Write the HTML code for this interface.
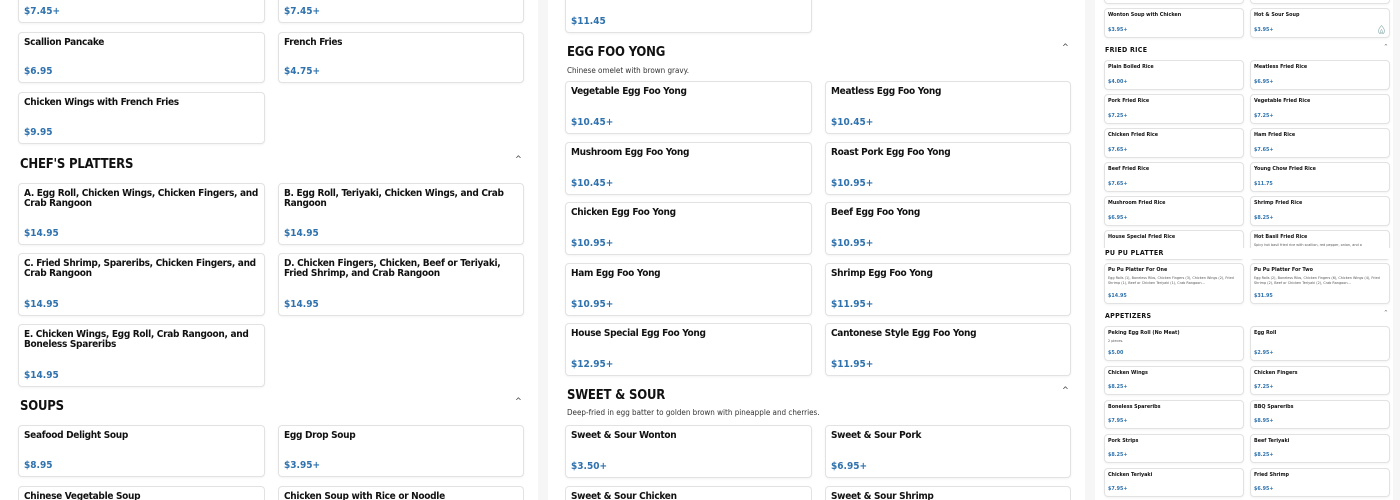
<!DOCTYPE html>
<html><head><style>
*{margin:0;padding:0;box-sizing:border-box}
html,body{width:1400px;height:500px;overflow:hidden}
body{background:#fff;font-family:"DejaVu Sans Condensed","DejaVu Sans","Liberation Sans",sans-serif;font-stretch:condensed;color:#111}
#w{position:relative;width:1400px;height:500px;overflow:hidden}
.g{position:absolute;top:0;height:500px;background:#f6f6f6}
.c{position:absolute;border:1px solid #e2e2e2;border-radius:4px;background:#fff;box-shadow:0 1px 2px rgba(0,0,0,.05)}
.b{border-bottom:none;border-radius:4px 4px 0 0;height:14px;box-shadow:none}
.t{position:absolute;left:5px;top:5px;right:3px;font-weight:bold;font-size:10px;line-height:10px;letter-spacing:-.3px}
.p{position:absolute;left:5px;bottom:5px;font-weight:bold;font-size:10px;color:#2f72ad}
.h{position:absolute;font-weight:bold;font-size:13px;letter-spacing:-.2px}
.s{position:absolute;font-size:8px;color:#333}
.v{position:absolute;font-size:9px;color:#444}
.r .t{left:3px;top:3px;font-size:5.4px;line-height:6px;letter-spacing:0}
.r .p{left:3px;bottom:4px;font-size:5.4px}
.r .d{position:absolute;left:3px;top:11px;right:3px;font-size:3.8px;line-height:5px;color:#555}
.rh{position:absolute;font-weight:bold;font-size:7px;letter-spacing:.3px}
.rv{position:absolute;font-size:5px;color:#555}
</style></head><body><div id="w">
<div class="g" style="left:538px;width:10px"></div>
<div class="g" style="left:1085px;width:10px"></div>
<div class="g" style="left:1393px;width:7px"></div>

<!-- Panel 1 -->
<div class="c" style="left:18px;top:-30px;width:247px;height:53px"><div class="p">$7.45+</div></div>
<div class="c" style="left:278px;top:-30px;width:246px;height:53px"><div class="p">$7.45+</div></div>
<div class="c" style="left:18px;top:32px;width:247px;height:51px"><div class="t">Scallion Pancake</div><div class="p">$6.95</div></div>
<div class="c" style="left:278px;top:32px;width:246px;height:51px"><div class="t">French Fries</div><div class="p">$4.75+</div></div>
<div class="c" style="left:18px;top:92px;width:247px;height:52px"><div class="t">Chicken Wings with French Fries</div><div class="p">$9.95</div></div>
<div class="h" style="left:20px;top:157px">CHEF'S PLATTERS</div><div class="v" style="left:515px;top:155px">^</div>
<div class="c" style="left:18px;top:183px;width:247px;height:62px"><div class="t">A. Egg Roll, Chicken Wings, Chicken Fingers, and Crab Rangoon</div><div class="p">$14.95</div></div>
<div class="c" style="left:278px;top:183px;width:246px;height:62px"><div class="t">B. Egg Roll, Teriyaki, Chicken Wings, and Crab Rangoon</div><div class="p">$14.95</div></div>
<div class="c" style="left:18px;top:253px;width:247px;height:63px"><div class="t">C. Fried Shrimp, Spareribs, Chicken Fingers, and Crab Rangoon</div><div class="p">$14.95</div></div>
<div class="c" style="left:278px;top:253px;width:246px;height:63px"><div class="t">D. Chicken Fingers, Chicken, Beef or Teriyaki, Fried Shrimp, and Crab Rangoon</div><div class="p">$14.95</div></div>
<div class="c" style="left:18px;top:324px;width:247px;height:63px"><div class="t">E. Chicken Wings, Egg Roll, Crab Rangoon, and Boneless Spareribs</div><div class="p">$14.95</div></div>
<div class="h" style="left:20px;top:399px">SOUPS</div><div class="v" style="left:515px;top:397px">^</div>
<div class="c" style="left:18px;top:425px;width:247px;height:52px"><div class="t">Seafood Delight Soup</div><div class="p">$8.95</div></div>
<div class="c" style="left:278px;top:425px;width:246px;height:52px"><div class="t">Egg Drop Soup</div><div class="p">$3.95+</div></div>
<div class="c b" style="left:18px;top:486px;width:247px"><div class="t">Chinese Vegetable Soup</div></div>
<div class="c b" style="left:278px;top:486px;width:246px"><div class="t">Chicken Soup with Rice or Noodle</div></div>

<!-- Panel 2 -->
<div class="c" style="left:565px;top:-30px;width:247px;height:63px"><div class="p">$11.45</div></div>
<div class="h" style="left:567px;top:45px">EGG FOO YONG</div><div class="v" style="left:1062px;top:43px">^</div>
<div class="s" style="left:567px;top:66px">Chinese omelet with brown gravy.</div>
<div class="c" style="left:565px;top:81px;width:247px;height:53px"><div class="t">Vegetable Egg Foo Yong</div><div class="p">$10.45+</div></div>
<div class="c" style="left:825px;top:81px;width:246px;height:53px"><div class="t">Meatless Egg Foo Yong</div><div class="p">$10.45+</div></div>
<div class="c" style="left:565px;top:142px;width:247px;height:53px"><div class="t">Mushroom Egg Foo Yong</div><div class="p">$10.45+</div></div>
<div class="c" style="left:825px;top:142px;width:246px;height:53px"><div class="t">Roast Pork Egg Foo Yong</div><div class="p">$10.95+</div></div>
<div class="c" style="left:565px;top:202px;width:247px;height:53px"><div class="t">Chicken Egg Foo Yong</div><div class="p">$10.95+</div></div>
<div class="c" style="left:825px;top:202px;width:246px;height:53px"><div class="t">Beef Egg Foo Yong</div><div class="p">$10.95+</div></div>
<div class="c" style="left:565px;top:263px;width:247px;height:53px"><div class="t">Ham Egg Foo Yong</div><div class="p">$10.95+</div></div>
<div class="c" style="left:825px;top:263px;width:246px;height:53px"><div class="t">Shrimp Egg Foo Yong</div><div class="p">$11.95+</div></div>
<div class="c" style="left:565px;top:323px;width:247px;height:53px"><div class="t">House Special Egg Foo Yong</div><div class="p">$12.95+</div></div>
<div class="c" style="left:825px;top:323px;width:246px;height:53px"><div class="t">Cantonese Style Egg Foo Yong</div><div class="p">$11.95+</div></div>
<div class="h" style="left:567px;top:388px">SWEET &amp; SOUR</div><div class="v" style="left:1062px;top:386px">^</div>
<div class="s" style="left:567px;top:408px">Deep-fried in egg batter to golden brown with pineapple and cherries.</div>
<div class="c" style="left:565px;top:425px;width:247px;height:53px"><div class="t">Sweet &amp; Sour Wonton</div><div class="p">$3.50+</div></div>
<div class="c" style="left:825px;top:425px;width:246px;height:53px"><div class="t">Sweet &amp; Sour Pork</div><div class="p">$6.95+</div></div>
<div class="c b" style="left:565px;top:486px;width:247px"><div class="t">Sweet &amp; Sour Chicken</div></div>
<div class="c b" style="left:825px;top:486px;width:246px"><div class="t">Sweet &amp; Sour Shrimp</div></div>

<!-- Panel 3 -->
<div class="r">
<div class="c" style="left:1104px;top:-20px;width:140px;height:24px"></div>
<div class="c" style="left:1250px;top:-20px;width:140px;height:24px"></div>
<div class="c" style="left:1104px;top:8px;width:140px;height:30px"><div class="t">Wonton Soup with Chicken</div><div class="p">$3.95+</div></div>
<div class="c" style="left:1250px;top:8px;width:140px;height:30px"><div class="t">Hot &amp; Sour Soup</div><div class="p">$3.95+</div>
<svg style="position:absolute;right:4px;bottom:3px" width="7" height="9" viewBox="0 0 7 9"><path d="M3.5 .5C5 2.5 6.5 4 6.5 6A3 3 0 0 1 .5 6C.5 4 2 2.5 3.5.5ZM3.5 4.5C4.3 5.5 4.8 6.3 4.5 7.3A1.1 1.1 0 0 1 2.5 7.3C2.2 6.3 2.7 5.5 3.5 4.5Z" fill="none" stroke="#8aa" stroke-width=".6"/></svg></div>
<div class="rh" style="left:1105px;top:46px">FRIED RICE</div><div class="rv" style="left:1384px;top:44px">^</div>
<div class="c" style="left:1104px;top:60px;width:140px;height:30px"><div class="t">Plain Boiled Rice</div><div class="p">$4.00+</div></div>
<div class="c" style="left:1250px;top:60px;width:140px;height:30px"><div class="t">Meatless Fried Rice</div><div class="p">$6.95+</div></div>
<div class="c" style="left:1104px;top:94px;width:140px;height:30px"><div class="t">Pork Fried Rice</div><div class="p">$7.25+</div></div>
<div class="c" style="left:1250px;top:94px;width:140px;height:30px"><div class="t">Vegetable Fried Rice</div><div class="p">$7.25+</div></div>
<div class="c" style="left:1104px;top:128px;width:140px;height:30px"><div class="t">Chicken Fried Rice</div><div class="p">$7.65+</div></div>
<div class="c" style="left:1250px;top:128px;width:140px;height:30px"><div class="t">Ham Fried Rice</div><div class="p">$7.65+</div></div>
<div class="c" style="left:1104px;top:162px;width:140px;height:30px"><div class="t">Beef Fried Rice</div><div class="p">$7.65+</div></div>
<div class="c" style="left:1250px;top:162px;width:140px;height:30px"><div class="t">Young Chow Fried Rice</div><div class="p">$11.75</div></div>
<div class="c" style="left:1104px;top:196px;width:140px;height:30px"><div class="t">Mushroom Fried Rice</div><div class="p">$6.95+</div></div>
<div class="c" style="left:1250px;top:196px;width:140px;height:30px"><div class="t">Shrimp Fried Rice</div><div class="p">$8.25+</div></div>
<div class="c" style="left:1104px;top:230px;width:140px;height:30px"><div class="t">House Special Fried Rice</div></div>
<div class="c" style="left:1250px;top:230px;width:140px;height:30px"><div class="t">Hot Basil Fried Rice</div><div class="d">Spicy hot basil fried rice with scallion, red pepper, onion, and a</div></div>
<div style="position:absolute;left:1100px;top:248px;width:293px;height:11px;background:#fff"></div>
<div class="rh" style="left:1105px;top:249px">PU PU PLATTER</div>
<div class="c" style="left:1104px;top:263px;width:140px;height:41px"><div class="t">Pu Pu Platter For One</div><div class="d">Egg Rolls (1), Boneless Ribs, Chicken Fingers (3), Chicken Wings (2), Fried Shrimp (1), Beef or Chicken Teriyaki (1), Crab Rangoon...</div><div class="p">$14.95</div></div>
<div class="c" style="left:1250px;top:263px;width:140px;height:41px"><div class="t">Pu Pu Platter For Two</div><div class="d">Egg Rolls (2), Boneless Ribs, Chicken Fingers (6), Chicken Wings (4), Fried Shrimp (2), Beef or Chicken Teriyaki (2), Crab Rangoon...</div><div class="p">$31.95</div></div>
<div class="rh" style="left:1105px;top:312px">APPETIZERS</div><div class="rv" style="left:1384px;top:310px">^</div>
<div class="c" style="left:1104px;top:326px;width:140px;height:35px"><div class="t">Peking Egg Roll (No Meat)</div><div class="d">2 pieces.</div><div class="p">$5.00</div></div>
<div class="c" style="left:1250px;top:326px;width:140px;height:35px"><div class="t">Egg Roll</div><div class="p">$2.95+</div></div>
<div class="c" style="left:1104px;top:366px;width:140px;height:29px"><div class="t">Chicken Wings</div><div class="p">$8.25+</div></div>
<div class="c" style="left:1250px;top:366px;width:140px;height:29px"><div class="t">Chicken Fingers</div><div class="p">$7.25+</div></div>
<div class="c" style="left:1104px;top:400px;width:140px;height:29px"><div class="t">Boneless Spareribs</div><div class="p">$7.95+</div></div>
<div class="c" style="left:1250px;top:400px;width:140px;height:29px"><div class="t">BBQ Spareribs</div><div class="p">$8.95+</div></div>
<div class="c" style="left:1104px;top:434px;width:140px;height:29px"><div class="t">Pork Strips</div><div class="p">$8.25+</div></div>
<div class="c" style="left:1250px;top:434px;width:140px;height:29px"><div class="t">Beef Teriyaki</div><div class="p">$8.25+</div></div>
<div class="c" style="left:1104px;top:468px;width:140px;height:29px"><div class="t">Chicken Teriyaki</div><div class="p">$7.95+</div></div>
<div class="c" style="left:1250px;top:468px;width:140px;height:29px"><div class="t">Fried Shrimp</div><div class="p">$6.95+</div></div>
</div>
</div></body></html>
